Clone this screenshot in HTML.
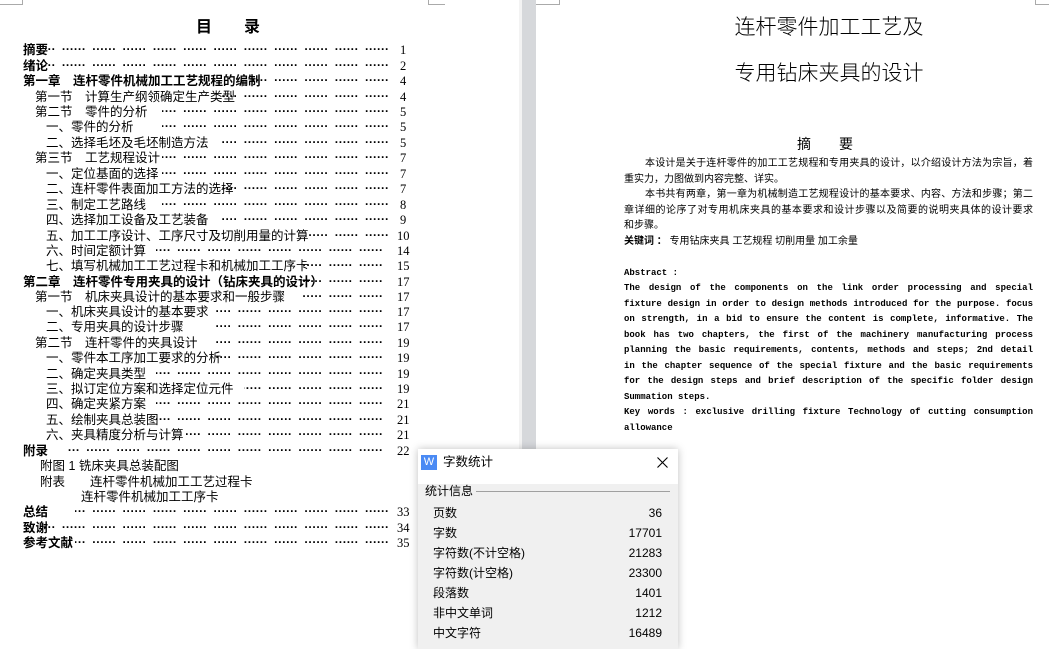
<!DOCTYPE html>
<html><head><meta charset="utf-8"><style>
*{margin:0;padding:0;box-sizing:border-box}
body{width:1049px;height:643px;overflow:hidden;background:#fff;position:relative;font-family:"Liberation Serif","Noto Serif CJK SC","Noto Sans CJK SC",serif;color:#000}
.gap{position:absolute;left:522px;top:0;width:14px;height:643px;background:#d6d8db}
.gap2{position:absolute;left:519px;top:0;width:3px;height:643px;background:#f3f3f3}
.r{position:absolute;height:16px;line-height:16px;font-size:12.5px;white-space:nowrap;font-family:"Liberation Sans","Noto Sans CJK SC",sans-serif}
.b{font-weight:bold}
.d{position:absolute;height:16px;line-height:14px;font-size:12px;overflow:hidden;white-space:nowrap;direction:rtl;font-family:"Liberation Sans",sans-serif;word-spacing:3px;font-weight:bold}
.n{position:absolute;font-size:12.5px;height:16px;line-height:16px;font-family:"Liberation Serif",serif}
.cn{position:absolute;left:624px;width:409px;font-size:10px;line-height:15px;height:15px;text-align:justify;text-align-last:justify;white-space:nowrap;overflow:hidden;font-family:"Liberation Sans","Noto Sans CJK SC",sans-serif}
.en{position:absolute;left:624px;width:409px;font-size:9px;line-height:15px;height:15px;text-align:justify;text-align-last:justify;font-family:"Liberation Mono",monospace;font-weight:bold;white-space:nowrap}
.dlg{position:absolute;left:418px;top:449px;width:260px;height:200px;background:#f0f0f0;box-shadow:0 0 8px rgba(0,0,0,.25);font-family:"Liberation Sans","Noto Sans CJK SC",sans-serif;font-size:12px}
.row{position:absolute;left:15px;width:229px;height:20px;line-height:20px}
.row span{position:absolute;right:0}
</style></head><body>
<div class="gap2"></div><div class="gap"></div>
<div style="position:absolute;left:0;top:0;width:23px;height:5px;border-right:1px solid #aaa;border-bottom:1px solid #aaa"></div>
<div style="position:absolute;left:428px;top:0;width:17px;height:5px;border-left:1px solid #aaa;border-bottom:1px solid #aaa"></div>
<div style="position:absolute;left:536px;top:0;width:24px;height:5px;border-right:1px solid #aaa;border-bottom:1px solid #aaa"></div>
<div style="position:absolute;left:1035px;top:0;width:14px;height:5px;border-left:1px solid #aaa;border-bottom:1px solid #aaa"></div>

<div style="position:absolute;left:196px;top:13px;font-size:16px;font-weight:bold;font-family:'Liberation Sans','Noto Sans CJK SC',sans-serif;letter-spacing:0">目　　录</div>

<div id="toc"></div>

<div style="position:absolute;left:629px;width:400px;top:14px;text-align:center;font-size:21px;font-family:'Liberation Sans','Noto Sans CJK SC',sans-serif;line-height:28px;font-weight:300">连杆零件加工工艺及</div>
<div style="position:absolute;left:629px;width:400px;top:60px;text-align:center;font-size:21px;font-family:'Liberation Sans','Noto Sans CJK SC',sans-serif;line-height:28px;font-weight:300">专用钻床夹具的设计</div>
<div style="position:absolute;left:797px;top:134px;font-size:14px;font-family:'Liberation Sans','Noto Sans CJK SC',sans-serif">摘　　要</div>

<div class="cn" style="top:156px;padding-left:21px">本设计是关于连杆零件的加工工艺规程和专用夹具的设计，以介绍设计方法为宗旨，着</div>
<div class="cn" style="top:172px;text-align-last:left">重实力，力图做到内容完整、详实。</div>
<div class="cn" style="top:187px;padding-left:21px">本书共有两章，第一章为机械制造工艺规程设计的基本要求、内容、方法和步骤；第二</div>
<div class="cn" style="top:203px">章详细的论序了对专用机床夹具的基本要求和设计步骤以及简要的说明夹具体的设计要求</div>
<div class="cn" style="top:218px;text-align-last:left">和步骤。</div>
<div class="cn" style="top:234px;text-align-last:left"><b>关键词 ：</b> 专用钻床夹具 工艺规程 切削用量 加工余量</div>

<div class="en" style="top:266px;text-align-last:left">Abstract :</div>
<div class="en" style="top:281px">The design of the components on the link order processing and special</div>
<div class="en" style="top:297px">fixture design in order to design methods introduced for the purpose. focus</div>
<div class="en" style="top:312px">on strength, in a bid to ensure the content is complete, informative. The</div>
<div class="en" style="top:328px">book has two chapters, the first of the machinery manufacturing process</div>
<div class="en" style="top:343px">planning the basic requirements, contents, methods and steps; 2nd detail</div>
<div class="en" style="top:359px">in the chapter sequence of the special fixture and the basic requirements</div>
<div class="en" style="top:374px">for the design steps and brief description of the specific folder design</div>
<div class="en" style="top:390px;text-align-last:left">Summation steps.</div>
<div class="en" style="top:405px">Key words : exclusive drilling fixture Technology of cutting consumption</div>
<div class="en" style="top:421px;text-align-last:left">allowance</div>

<div class="dlg">
 <div style="position:absolute;left:0;top:0;width:260px;height:35px;background:#fff"></div>
 <div style="position:absolute;left:3px;top:6px;width:16px;height:15px;background:#4a8af4;color:#fff;font-size:11px;line-height:15px;text-align:center">W</div>
 <div style="position:absolute;left:25px;top:4px;font-size:12.5px;line-height:18px">字数统计</div>
 <svg style="position:absolute;left:239px;top:8px" width="11" height="11" viewBox="0 0 11 11"><path d="M0.5 0.5L10.5 10.5M10.5 0.5L0.5 10.5" stroke="#000" stroke-width="1.1"/></svg>
 <div style="position:absolute;left:7px;top:33px;line-height:18px">统计信息</div>
 <div style="position:absolute;left:58px;top:42px;width:194px;height:1px;background:#a0a0a0"></div>
 <div class="row" style="top:54px">页数<span>36</span></div>
 <div class="row" style="top:74px">字数<span>17701</span></div>
 <div class="row" style="top:94px">字符数(不计空格)<span>21283</span></div>
 <div class="row" style="top:114px">字符数(计空格)<span>23300</span></div>
 <div class="row" style="top:134px">段落数<span>1401</span></div>
 <div class="row" style="top:154px">非中文单词<span>1212</span></div>
 <div class="row" style="top:174px">中文字符<span>16489</span></div>
</div>

<script>
var L=[
[50,23,"摘要",1,45,389,"1"],[66,23,"绪论",1,45,389,"2"],
[81,23,"第一章　连杆零件机械加工工艺规程的编制",1,250,389,"4"],
[97,35,"第一节　计算生产纲领确定生产类型",0,220,389,"4"],
[112,35,"第二节　零件的分析",0,162,389,"5"],
[127,46,"一、零件的分析",0,162,389,"5"],
[143,46,"二、选择毛坯及毛坯制造方法",0,220,389,"5"],
[158,35,"第三节　工艺规程设计",0,162,389,"7"],
[174,46,"一、定位基面的选择",0,162,389,"7"],
[189,46,"二、连杆零件表面加工方法的选择",0,220,389,"7"],
[205,46,"三、制定工艺路线",0,162,389,"8"],
[220,46,"四、选择加工设备及工艺装备",0,220,389,"9"],
[236,46,"五、加工工序设计、工序尺寸及切削用量的计算",0,308,389,"10"],
[251,46,"六、时间定额计算",0,156,383,"14"],
[266,46,"七、填写机械加工工艺过程卡和机械加工工序卡",0,302,383,"15"],
[282,23,"第二章　连杆零件专用夹具的设计（钻床夹具的设计）",1,303,383,"17"],
[297,35,"第一节　机床夹具设计的基本要求和一般步骤",0,302,383,"17"],
[312,46,"一、机床夹具设计的基本要求",0,215,383,"17"],
[327,46,"二、专用夹具的设计步骤",0,215,383,"17"],
[343,35,"第二节　连杆零件的夹具设计",0,215,383,"19"],
[358,46,"一、零件本工序加工要求的分析",0,215,383,"19"],
[374,46,"二、确定夹具类型",0,156,383,"19"],
[389,46,"三、拟订定位方案和选择定位元件",0,244,383,"19"],
[404,46,"四、确定夹紧方案",0,156,383,"21"],
[420,46,"五、绘制夹具总装图",0,156,383,"21"],
[435,46,"六、夹具精度分析与计算",0,186,383,"21"],
[451,23,"附录",1,68,383,"22"],
[466,40,"附图 1  铣床夹具总装配图",0,0,0,""],
[482,40,"附表　　连杆零件机械加工工艺过程卡",0,0,0,""],
[497,81,"连杆零件机械加工工序卡",0,0,0,""],
[512,23,"总结",1,75,389,"33"],
[528,23,"致谢",1,45,389,"34"],
[543,23,"参考文献",1,75,389,"35"]];
var h="",dots="";for(var i=0;i<20;i++)dots+="······ ";
L.forEach(function(a){
h+='<div class="r'+(a[3]?' b':'')+'" style="top:'+(a[0]-8)+'px;left:'+a[1]+'px">'+a[2]+'</div>';
if(a[4])h+='<div class="d" style="top:'+(a[0]-8)+'px;left:'+a[4]+'px;width:'+(a[5]-a[4])+'px">'+dots+'</div>';
if(a[6])h+='<div class="n" style="top:'+(a[0]-8)+'px;left:'+(a[6].length>1?397:400)+'px">'+a[6]+'</div>';
});
document.getElementById("toc").innerHTML=h;
</script>
</body></html>
